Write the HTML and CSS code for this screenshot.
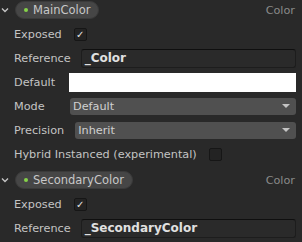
FILE: index.html
```html
<!DOCTYPE html>
<html lang="en">
<head>
    <meta charset="UTF-8">
    <title>Shader Properties</title>
    <link rel="stylesheet" href="styles.css">
</head>
<body>
    <div class="section">
        <div class="header">
            <svg class="chevron" width="8" height="6" viewBox="0 0 8 6"><polyline points="1,1.5 4,4.5 7,1.5" fill="none" stroke="#c4c4c4" stroke-width="1.4"/></svg>
            <div class="pill"><span class="dot"></span>MainColor</div>
            <span class="type">Color</span>
        </div>
        <div class="row">
            <span class="label">Exposed</span>
            <span class="check on">&#10003;</span>
        </div>
        <div class="row">
            <span class="label">Reference</span>
            <div class="field">_Color</div>
        </div>
        <div class="row">
            <span class="label">Default</span>
            <div class="swatch"></div>
        </div>
        <div class="row">
            <span class="label">Mode</span>
            <div class="dropdown">Default<span class="arrow"></span></div>
        </div>
        <div class="row">
            <span class="label">Precision</span>
            <div class="dropdown">Inherit<span class="arrow"></span></div>
        </div>
        <div class="row">
            <span class="label">Hybrid Instanced (experimental)</span>
            <span class="check"></span>
        </div>
    </div>

    <div class="section second">
        <div class="header">
            <svg class="chevron" width="8" height="6" viewBox="0 0 8 6"><polyline points="1,1.5 4,4.5 7,1.5" fill="none" stroke="#c4c4c4" stroke-width="1.4"/></svg>
            <div class="pill"><span class="dot"></span>SecondaryColor</div>
            <span class="type">Color</span>
        </div>
        <div class="row">
            <span class="label">Exposed</span>
            <span class="check on">&#10003;</span>
        </div>
        <div class="row">
            <span class="label">Reference</span>
            <div class="field">_SecondaryColor</div>
        </div>
    </div>
</body>
</html>
```

FILE: styles.css
```css
body {
    margin: 0;
    background-color: #292929;
    font-family: "DejaVu Sans", sans-serif;
    font-size: 11.25px;
    color: #c4c4c4;
    overflow: hidden;
}

.section {
    padding-right: 6px;
}

.second {
    margin-top: 4px;
}

/* property header with the collapse arrow */
.header {
    display: flex;
    align-items: center;
    height: 18px;
    padding: 1px 0 3px 0;
}

.chevron {
    margin: 0 6px 0 1px;
}

.pill {
    display: flex;
    align-items: center;
    height: 16px;
    padding: 0 8px 0 8px;
    background-color: #464646;
    border: 1px solid #3a3a3a;
    border-radius: 9px;
    color: #c8c8c8;
    font-size: 11.5px;
}

.dot {
    width: 4px;
    height: 4px;
    border-radius: 50%;
    background-color: #86d24a;
    margin-right: 5px;
}

.type {
    margin-left: auto;
    margin-right: 1px;
    color: #8a8a8a;
}

.row {
    display: flex;
    align-items: center;
    height: 24px;
    padding-left: 14px;
}

.label {
    box-sizing: border-box;
    min-width: 55px;
    padding-right: 10px;
    white-space: nowrap;
}

.check {
    box-sizing: border-box;
    width: 13px;
    height: 13px;
    margin-left: 2px;
    background-color: #232323;
    border: 1px solid #161616;
    border-radius: 2px;
    color: #e6e6e6;
    font-size: 10px;
    line-height: 11px;
    text-align: center;
}

.field {
    flex: 1;
    box-sizing: border-box;
    height: 19px;
    padding-left: 3px;
    background-color: #2a2a2a;
    border: 1px solid #1d1d1d;
    border-top-color: #0f0f0f;
    border-radius: 3px;
    color: #e0e0e0;
    font-weight: bold;
    font-size: 12px;
    line-height: 17px;
}

.swatch {
    flex: 1;
    height: 19px;
    background-color: #ffffff;
}

.dropdown {
    flex: 1;
    display: flex;
    align-items: center;
    height: 17px;
    padding-left: 3px;
    margin-left: 1px;
    background-color: #505050;
    border-radius: 3px;
    color: #d0d0d0;
}

.arrow {
    margin-left: auto;
    margin-right: 6px;
    width: 0;
    height: 0;
    border-left: 4px solid transparent;
    border-right: 4px solid transparent;
    border-top: 4px solid #c4c4c4;
}
```
